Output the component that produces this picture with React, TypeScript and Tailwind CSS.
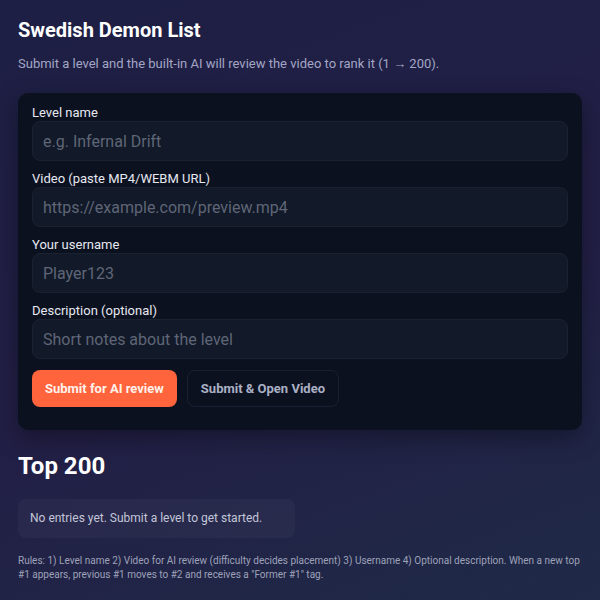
export default function App() {
  const fields = [
    { label: "Level name", placeholder: "e.g. Infernal Drift" },
    { label: "Video (paste MP4/WEBM URL)", placeholder: "https://example.com/preview.mp4" },
    { label: "Your username", placeholder: "Player123" },
    { label: "Description (optional)", placeholder: "Short notes about the level" },
  ];

  return (
    <div
      className="min-h-[600px] w-full bg-[linear-gradient(160deg,#1e1f44_0%,#221f46_55%,#1f2a47_100%)] px-[18px] pt-[18px] pb-6 text-white"
      style={{ fontFamily: "Roboto, 'Noto Sans', sans-serif" }}
    >
      <h1 className="text-[20px] font-bold leading-6">Swedish Demon List</h1>
      <p className="mt-[14px] text-[13px] leading-4 text-[#a3a6c4]">
        Submit a level and the built-in AI will review the video to rank it (1 → 200).
      </p>

      {/* Submission form */}
      <div className="mt-[21px] rounded-[10px] bg-[#0c1120] px-[14px] pt-3 pb-[23px] shadow-[0_8px_24px_rgba(0,0,0,0.35)]">
        <div className="flex flex-col gap-[10px]">
          {fields.map((f) => (
            <label key={f.label} className="flex flex-col">
              <span className="text-[13px] leading-4 text-[#e6e8f0]">{f.label}</span>
              <input
                placeholder={f.placeholder}
                className="h-10 w-full rounded-lg border border-[#1a2232] bg-[#121928] px-[10px] text-[16px] text-white outline-none placeholder:text-[#5f6677]"
              />
            </label>
          ))}
        </div>
        <div className="mt-[11px] flex gap-[10px]">
          <button className="h-[37px] rounded-lg bg-[#ff643c] px-[13px] text-[13px] font-bold text-[#fff1ea]">
            Submit for AI review
          </button>
          <button className="h-[37px] rounded-lg border border-[#182033] bg-[#0c1120] px-[13px] text-[13px] font-bold text-[#aab0c4]">
            Submit &amp; Open Video
          </button>
        </div>
      </div>

      <h2 className="mt-[22px] text-[24px] font-bold leading-7">Top 200</h2>

      <div className="mt-[19px] w-[277px] rounded-lg bg-[#ffffff09] px-3 py-[11px] text-[12px] leading-[17px] text-[#c3c6d8]">
        No entries yet. Submit a level to get started.
      </div>

      <p className="mt-[16px] text-[10px] leading-[14px] text-[#9ea2b9]">
        Rules: 1) Level name 2) Video for AI review (difficulty decides placement) 3) Username 4) Optional description. When a new top #1 appears, previous #1 moves to #2 and receives a "Former #1" tag.
      </p>
    </div>
  );
}
